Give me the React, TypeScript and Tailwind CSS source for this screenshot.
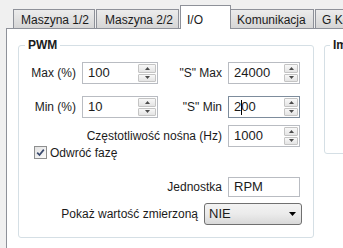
import React from "react";

const Arrow = ({ up }: { up?: boolean }) => (
  <svg width="5" height="3" viewBox="0 0 5 3" className="block">
    <path d={up ? "M0 3 L2.5 0 L5 3 Z" : "M0 0 L2.5 3 L5 0 Z"} fill="#4b4b4b" />
  </svg>
);

const Spinner = ({ w }: { w: string }) => (
  <div className={`flex flex-col gap-px p-px ${w}`}>
    <div className="flex flex-1 items-center justify-center rounded-[1px] border border-[#c4c4c4] bg-gradient-to-b from-[#f8f8f8] to-[#e4e4e4]">
      <Arrow up />
    </div>
    <div className="flex flex-1 items-center justify-center rounded-[1px] border border-[#c4c4c4] bg-gradient-to-b from-[#f8f8f8] to-[#e4e4e4]">
      <Arrow />
    </div>
  </div>
);

const NumBox = ({
  value,
  w,
  spin,
  focused,
}: {
  value: React.ReactNode;
  w: string;
  spin: string;
  focused?: boolean;
}) => (
  <div
    className={`flex h-[22px] bg-white border ${w} ${
      focused ? "border-[#7d8c9c]" : "border-[#b9bcc2]"
    }`}
  >
    <span className="flex flex-1 items-center pl-[5px] text-[13px] leading-[20px]">{value}</span>
    <Spinner w={spin} />
  </div>
);

const tab =
  "flex h-[19px] shrink-0 items-center whitespace-nowrap border-t border-[#8e9199] bg-gradient-to-b from-[#ececec] to-[#d6d6d6] pt-[2px]";

export default function App() {
  return (
    <div className="flex h-[248px] w-[343px] flex-col overflow-hidden bg-[#f0f0f0] font-['Liberation_Sans',Arial,sans-serif] text-[12px] text-[#1b1b1b]">
      {/* Tabs */}
      <div className="relative z-10 flex h-[28px] shrink-0 items-end pl-[13px]">
        <div className={`${tab} w-[82px] border-l border-r pl-[7px]`}>Maszyna 1/2</div>
        <div className={`${tab} ml-px w-[83px] border-l border-r pl-[8px]`}>Maszyna 2/2</div>
        <div className="relative mb-[-1px] ml-px flex h-[24px] w-[51px] shrink-0 items-start border-l border-r border-t border-[#8e9199] bg-white pl-[6px] pt-[5px]">
          I/O
        </div>
        <div className={`${tab} w-[83px] border-r pl-[6px]`}>Komunikacja</div>
        <div className={`${tab} ml-px w-[60px] border-l pl-[6px]`}>G Kody</div>
      </div>

      {/* Panel */}
      <div className="ml-[6px] flex flex-1 items-start gap-[10px] border-l border-t border-[#8e9199] bg-white pl-[11px] pt-[9px]">
        <fieldset className="w-[296px] shrink-0 rounded-[3px] border border-[#d5dfe5] pb-[12px]">
          <legend className="ml-[6px] px-[3px] font-bold leading-[14px]">PWM</legend>

          <div className="mt-[10px] flex h-[22px] items-center">
            <span className="w-[57px] text-right">Max (%)</span>
            <div className="ml-[6px]">
              <NumBox value="100" w="w-[76px]" spin="w-[20px]" />
            </div>
            <span className="w-[64px] text-right">"S" Max</span>
            <div className="ml-[6px]">
              <NumBox value="24000" w="w-[72px]" spin="w-[16px]" />
            </div>
          </div>

          <div className="mt-[12px] flex h-[22px] items-center">
            <span className="w-[57px] text-right">Min (%)</span>
            <div className="ml-[6px]">
              <NumBox value="10" w="w-[76px]" spin="w-[20px]" />
            </div>
            <span className="w-[64px] text-right">"S" Min</span>
            <div className="ml-[6px]">
              <NumBox
                focused
                w="w-[72px]"
                spin="w-[16px]"
                value={
                  <>
                    2<span className="mr-[-1px] inline-block h-[15px] w-px bg-black" />
                    00
                  </>
                }
              />
            </div>
          </div>

          <div className="mt-[7px] flex h-[22px] items-center">
            <span className="w-[203px] text-right">Częstotliwość nośna (Hz)</span>
            <div className="ml-[6px]">
              <NumBox value="1000" w="w-[72px]" spin="w-[16px]" />
            </div>
          </div>

          <div className="mt-[-1px] flex h-[13px] items-center gap-[3px] pl-[15px]">
            <div className="flex h-[13px] w-[13px] items-center justify-center border border-[#8e8f8f] bg-gradient-to-br from-[#e2e2e2] to-[#fbfbfb]">
              <svg width="9" height="9" viewBox="0 0 9 9">
                <path d="M1.2 4.6 L3.5 7 L7.8 1.6" fill="none" stroke="#3a4a6e" strokeWidth="1.7" />
              </svg>
            </div>
            <span>Odwróć fazę</span>
          </div>

          <div className="mt-[18px] flex h-[20px] items-center">
            <span className="w-[203px] text-right">Jednostka</span>
            <div className="ml-[6px] flex h-[20px] w-[72px] items-center border border-[#b9bcc2] bg-white pl-[5px] text-[13px]">
              RPM
            </div>
          </div>

          <div className="mt-[6px] flex h-[22px] items-center">
            <span className="w-[179px] text-right">Pokaż wartość zmierzoną</span>
            <div className="ml-[6px] flex h-[22px] w-[98px] items-center justify-between rounded-[3px] border border-[#707070] bg-gradient-to-b from-[#f3f3f3] via-[#ebebeb] to-[#d9d9d9] pl-[4px] pr-[5px] text-[13px]">
              <span>NIE</span>
              <svg width="7" height="4" viewBox="0 0 7 4">
                <path d="M0 0 L3.5 4 L7 0 Z" fill="#000" />
              </svg>
            </div>
          </div>
        </fieldset>

        <fieldset className="h-[116px] w-[200px] shrink-0 rounded-[3px] border border-[#d5dfe5]">
          <legend className="ml-[5px] px-[3px] font-bold leading-[14px] whitespace-nowrap">Im</legend>
        </fieldset>
      </div>
    </div>
  );
}
